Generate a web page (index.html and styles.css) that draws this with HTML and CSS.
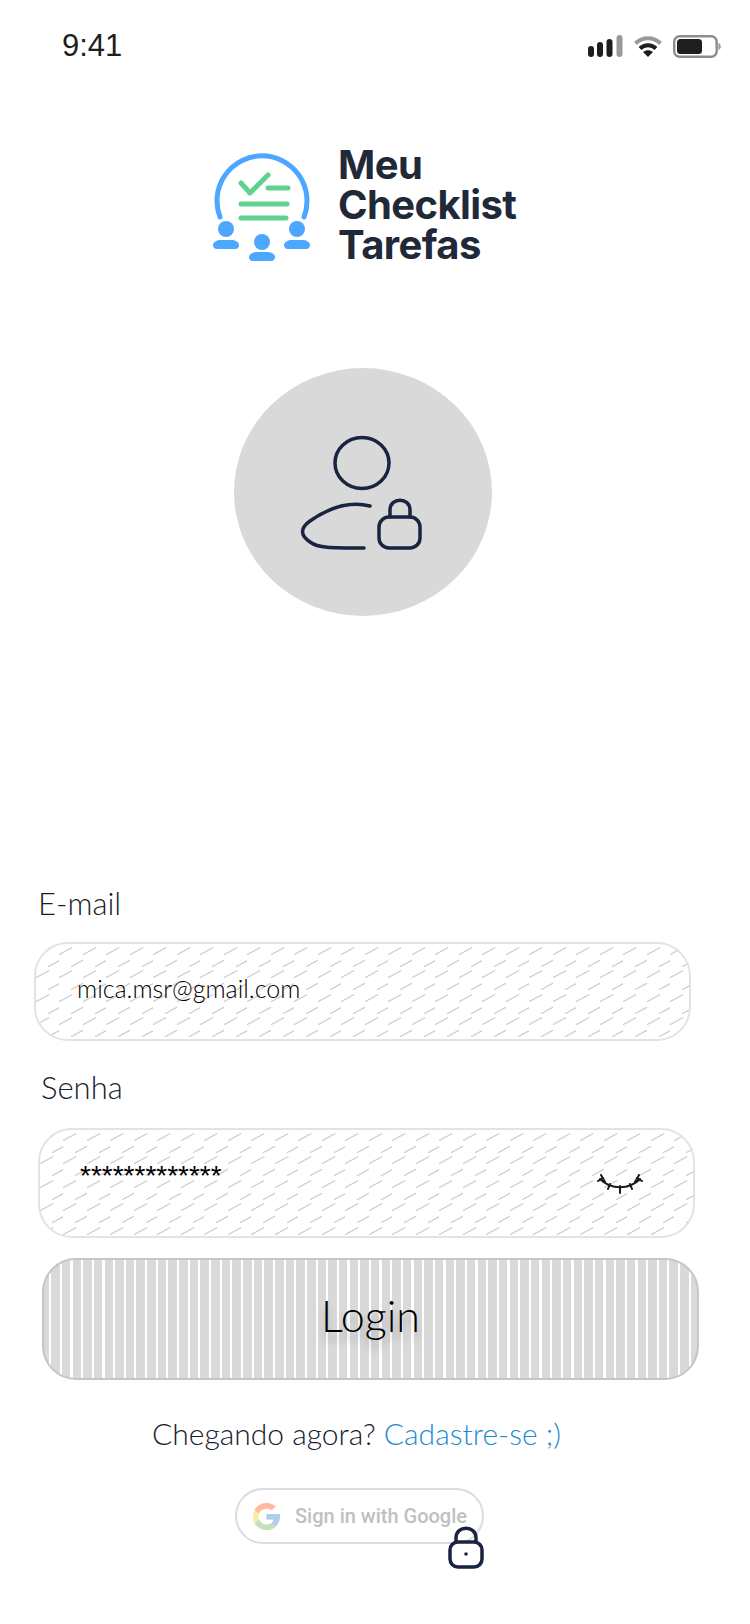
FILE: index.html
```html
<!DOCTYPE html>
<html lang="pt-BR">
<head>
    <meta charset="UTF-8">
    <meta name="viewport" content="width=device-width, initial-scale=1.0">
    <title>Meu Checklist Tarefas</title>
    <link rel="stylesheet" href="styles.css">
</head>
<body>
    <div class="screen">
        <!-- status bar -->
        <div class="status-bar">
            <span class="clock">9:41</span>
            <div class="status-icons">
                <svg width="35" height="22" viewBox="0 0 35 22">
                    <rect x="0" y="11" width="6" height="11" rx="3" fill="#1e1e1e"/>
                    <rect x="9" y="7" width="6" height="15" rx="3" fill="#1e1e1e"/>
                    <rect x="18.500" y="4" width="6" height="18" rx="3" fill="#1e1e1e"/>
                    <rect x="28.500" y="0" width="6" height="22" rx="3" fill="#999"/>
                </svg>
                <svg width="28" height="22" viewBox="0 0 28 22" fill="none">
                    <path d="M1.500 8.500C8.500 1.500 19.500 1.500 26.500 8.500" stroke="#999" stroke-width="4"/>
                    <path d="M6 13.500C10.500 9 17.500 9 22 13.500" stroke="#1e1e1e" stroke-width="4"/>
                    <path d="M14 22L9 17C12 14.500 16 14.500 19 17Z" fill="#1e1e1e"/>
                </svg>
                <svg width="49" height="23" viewBox="0 0 49 23" fill="none">
                    <rect x="1.200" y="1.200" width="42.500" height="20.600" rx="5.500" stroke="#8c8c8c" stroke-width="2.400"/>
                    <rect x="4" y="4" width="25" height="15" rx="3.500" fill="#1e1e1e"/>
                    <path d="M45.500 8C48.500 9 48.500 14 45.500 15Z" fill="#999"/>
                </svg>
            </div>
        </div>

        <!-- logo -->
        <div class="logo">
            <svg class="logo-mark" width="108" height="112" viewBox="0 0 108 112" fill="none">
                <path d="M11 67A45 45 0 1 1 95 67" stroke="#4da6ff" stroke-width="5" stroke-linecap="round"/>
                <g stroke="#5fd38d" stroke-width="5" stroke-linecap="round" stroke-linejoin="round">
                    <path d="M32 33L41 43L59 25"/>
                    <path d="M59 38H79"/>
                    <path d="M32 54H78"/>
                    <path d="M32 68H77"/>
                </g>
                <g fill="#4da6ff">
                    <circle cx="17" cy="79" r="8"/>
                    <path d="M4 95C4 92 8 90 12 90H22C26 90 30 92 30 95C30 97 29 99 26 99H8C5 99 4 97 4 95Z"/>
                    <circle cx="53" cy="92" r="8"/>
                    <path d="M40 107C40 104 44 102 48 102H58C62 102 66 104 66 107C66 109 65 111 62 111H44C41 111 40 109 40 107Z"/>
                    <circle cx="88" cy="79" r="8"/>
                    <path d="M75 95C75 92 79 90 83 90H93C97 90 101 92 101 95C101 97 100 99 97 99H79C76 99 75 97 75 95Z"/>
                </g>
            </svg>
            <div class="logo-text">Meu<br>Checklist<br>Tarefas</div>
        </div>

        <!-- avatar -->
        <div class="avatar">
            <svg width="126" height="118" viewBox="0 0 126 118" fill="none" stroke="#1a2340" stroke-width="3.500" stroke-linecap="round">
                <ellipse cx="62" cy="30" rx="27" ry="25.500"/>
                <path d="M70 73C50 68 30 74 10 88C0 95 0 102 10 109C18 115 30 115 64 115"/>
                <rect x="79" y="84" width="41" height="31" rx="10"/>
                <path d="M90 84V77C90 64 110 64 110 77V84"/>
            </svg>
        </div>

        <form class="login-form">
            <label class="field-label label-email">E-mail</label>
            <div class="field field-email"><span class="field-value">mica.msr@gmail.com</span></div>

            <label class="field-label label-senha">Senha</label>
            <div class="field field-senha">
                <span class="stars">*************</span>
                <svg class="eye" width="46" height="22" viewBox="0 0 46 22" fill="none" stroke="#1a1a1a" stroke-width="2" stroke-linecap="round">
                    <path d="M3 5C14 16 32 16 43 5"/>
                    <path d="M4 1L8 8"/>
                    <path d="M1 7L6 4"/>
                    <path d="M13 10L11 15"/>
                    <path d="M23 12V19"/>
                    <path d="M33 10L35 15"/>
                    <path d="M42 1L38 8"/>
                    <path d="M45 7L40 4"/>
                </svg>
            </div>

            <button class="login-btn" type="button">Login</button>

            <p class="signup">Chegando agora? <a href="#">Cadastre-se ;)</a></p>

            <div class="google-wrap">
                <button class="google-btn" type="button">
                    <svg class="google-icon" width="31" height="31" viewBox="0 0 48 48" fill="none">
                        <path d="M43.600 20H24v8.500h11.300C33.700 33.400 29.300 36.500 24 36.500 17.100 36.500 11.500 30.900 11.500 24S17.100 11.500 24 11.500c3.100 0 5.900 1.100 8.100 3l6-6C34.300 5 29.400 3 24 3 12.400 3 3 12.400 3 24s9.400 21 21 21 21-9.400 21-21c0-1.400-.1-2.700-.4-4z" fill="#ffc107"/>
                        <path d="M5.400 14.200l7 5.100C14.200 14.800 18.700 11.500 24 11.500c3.100 0 5.900 1.100 8.100 3l6-6C34.300 5 29.400 3 24 3 16 3 9 7.500 5.400 14.200z" fill="#ff3d00"/>
                        <path d="M24 45c5.300 0 10.100-2 13.800-5.300l-6.500-5.400c-2 1.400-4.600 2.200-7.300 2.200-5.300 0-9.700-3.100-11.400-7.900l-6.900 5.300C9.100 40.400 16 45 24 45z" fill="#4caf50"/>
                        <path d="M43.600 20H24v8.500h11.300c-.8 2.400-2.300 4.400-4 5.800l6.500 5.400C42 36 45 30.500 45 24c0-1.400-.1-2.700-.4-4z" fill="#1976d2"/>
                    </svg>
                    <span>Sign in with Google</span>
                </button>
                <svg class="float-lock" width="36" height="43" viewBox="0 0 36 43" fill="none" stroke="#1a2340" stroke-width="3.500">
                    <rect x="2" y="16" width="32" height="25" rx="8"/>
                    <path d="M8 16V12C8 -1 28 -1 28 12V16"/>
                    <circle cx="18" cy="28" r="1.800" fill="#1a2340" stroke="none"/>
                </svg>
            </div>
        </form>
    </div>
</body>
</html>
```

FILE: styles.css
```css
* {
    box-sizing: border-box;
}
html, body {
    margin: 0;
    padding: 0;
    background: #fff;
}
.screen {
    width: 750px;
    height: 1624px;
    overflow: hidden;
    font-family: Lato, sans-serif;
    color: #1e2a38;
}

/* status bar */
.status-bar {
    display: flex;
    justify-content: space-between;
    align-items: center;
    height: 46px;
    margin-top: 23px;
    padding: 0 28px 0 62px;
}
.clock {
    font-family: "Liberation Sans", Arial, sans-serif;
    font-size: 31px;
    color: #1e1e1e;
}
.status-icons {
    display: flex;
    align-items: center;
    gap: 11px;
}

/* logo */
.logo {
    display: flex;
    align-items: center;
    gap: 21px;
    margin: 76px 0 0 209px;
}
.logo-mark {
    flex: none;
    margin-top: 2px;
}
.logo-text {
    font-family: Inter, sans-serif;
    font-size: 40px;
    font-weight: 700;
    line-height: 40px;
    letter-spacing: -0.6px;
    color: #1f2937;
}

/* avatar */
.avatar {
    display: flex;
    align-items: center;
    justify-content: center;
    width: 258px;
    height: 248px;
    margin: 103px 0 0 234px;
    border-radius: 50%;
    background: #d9d9d9;
}

/* form */
.login-form {
    display: block;
    margin: 0;
}
.field-label {
    display: block;
    font-size: 31px;
    font-weight: 300;
    line-height: 36px;
    color: #16202c;
}
.label-email {
    margin: 269px 0 0 38px;
}
.label-senha {
    margin: 28px 0 0 41px;
}
.field {
    display: flex;
    align-items: center;
    justify-content: space-between;
    border: 2px solid #e3e3e3;
    border-radius: 34px;
    font-size: 25px;
    font-weight: 300;
    color: #000;
    background-color: #fff;
    background-image: url("data:image/svg+xml,%3Csvg xmlns='http://www.w3.org/2000/svg' width='23.500' height='23.500'%3E%3Cg stroke='%23cccccc' stroke-width='1.200' fill='none'%3E%3Cpath d='M0 10.500L13 3.500M11.750 22.250L24.750 15.250'/%3E%3C/g%3E%3C/svg%3E");
    background-size: 23.500px 23.500px;
}
.field-email {
    width: 657px;
    height: 99px;
    margin: 21px 0 0 34px;
    padding: 0 41px;
}
.field-value {
    margin-bottom: 8px;
}
.field-senha {
    width: 657px;
    height: 110px;
    margin: 23px 0 0 38px;
    padding: 0 50px 0 40px;
}
.stars {
    font-family: "Liberation Sans", Arial, sans-serif;
    font-size: 28px;
    margin-bottom: 14px;
}
.eye {
    flex: none;
    margin-top: 4px;
}
.login-btn {
    display: block;
    width: 657px;
    height: 122px;
    margin: 20px 0 0 42px;
    padding-bottom: 8px;
    border: 2px solid #c6c6c6;
    border-radius: 34px;
    font-family: Lato, sans-serif;
    font-size: 43px;
    font-weight: 300;
    color: #000;
    text-shadow: 0 8px 8px rgba(0, 0, 0, 0.25);
    background-color: #d9d9d9;
    background-image: repeating-linear-gradient(to right, #d9d9d9 0, #d9d9d9 5px, #fff 5px, #fff 7.200px, #d9d9d9 7.200px, #d9d9d9 10.660px);
}
.signup {
    margin: 34px 0 0;
    padding-right: 37px;
    text-align: center;
    font-size: 30px;
    font-weight: 300;
    line-height: 38px;
    color: #16202c;
}
.signup a {
    color: #1f8bd0;
    text-decoration: none;
}
.google-wrap {
    position: relative;
    width: 249px;
    margin: 36px 0 0 235px;
}
.google-btn {
    display: flex;
    align-items: center;
    gap: 13px;
    width: 249px;
    height: 56px;
    padding: 0 0 0 14px;
    border: 2px solid #dcdcdc;
    border-radius: 28px;
    background: #fff;
    font-family: Roboto, sans-serif;
    font-size: 20px;
    font-weight: 500;
    white-space: nowrap;
    color: #c0c0c0;
}
.google-icon {
    flex: none;
    opacity: 0.35;
}
.float-lock {
    position: absolute;
    left: 213px;
    top: 38px;
}
```
